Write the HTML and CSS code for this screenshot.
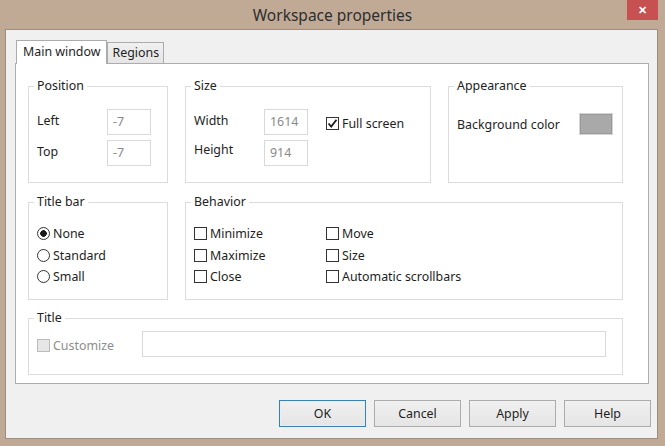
FILE: index.html
```html
<!DOCTYPE html>
<html lang="en">
<head>
    <meta charset="UTF-8">
    <title>Workspace properties</title>
    <link rel="stylesheet" href="styles.css">
</head>
<body>
    <div class="window">
        <div class="titlebar">
            <span></span>
            <span class="title">Workspace properties</span>
            <span class="close">&#x2715;</span>
        </div>

        <div class="client">
            <div class="tabs">
                <div class="tab active">Main window</div>
                <div class="tab">Regions</div>
            </div>

            <div class="panel">
                <div class="group">
                    <div class="group-title">Position</div>
                    <div class="field first">
                        <span class="field-label">Left</span>
                        <span class="edit">-7</span>
                    </div>
                    <div class="field">
                        <span class="field-label">Top</span>
                        <span class="edit">-7</span>
                    </div>
                </div>

                <div class="group">
                    <div class="group-title">Size</div>
                    <div class="field first">
                        <span class="field-label">Width</span>
                        <span class="edit">1614</span>
                        <span class="option fullscreen">
                            <span class="check">
                                <svg width="11" height="11" viewBox="0 0 11 11"><path d="M1.5 5.5 L4.2 8.5 L9.5 1.8" fill="none" stroke="#1a1a1a" stroke-width="1.8"/></svg>
                            </span>Full screen
                        </span>
                    </div>
                    <div class="field">
                        <span class="field-label raised">Height</span>
                        <span class="edit">914</span>
                    </div>
                </div>

                <div class="group">
                    <div class="group-title">Appearance</div>
                    <div class="field first">
                        <span class="field-label wide">Background color</span>
                        <span class="swatch"></span>
                    </div>
                </div>

                <div class="group tall">
                    <div class="group-title">Title bar</div>
                    <div class="options">
                        <span class="option"><span class="radio checked"></span>None</span>
                        <span class="option"><span class="radio"></span>Standard</span>
                        <span class="option"><span class="radio"></span>Small</span>
                    </div>
                </div>

                <div class="group tall span2">
                    <div class="group-title">Behavior</div>
                    <div class="options cols">
                        <span class="option"><span class="check"></span>Minimize</span>
                        <span class="option"><span class="check"></span>Move</span>
                        <span class="option"><span class="check"></span>Maximize</span>
                        <span class="option"><span class="check"></span>Size</span>
                        <span class="option"><span class="check"></span>Close</span>
                        <span class="option"><span class="check"></span>Automatic scrollbars</span>
                    </div>
                </div>

                <div class="group short span3">
                    <div class="group-title">Title</div>
                    <div class="field title-row">
                        <span class="option disabled"><span class="check"></span>Customize</span>
                        <span class="edit long"></span>
                    </div>
                </div>
            </div>

            <div class="buttons">
                <button class="btn default">OK</button>
                <button class="btn">Cancel</button>
                <button class="btn">Apply</button>
                <button class="btn">Help</button>
            </div>
        </div>
    </div>
</body>
</html>
```

FILE: styles.css
```css
body {
    margin: 0;
    background: #c0aa96;
    font-family: "Noto Sans", "Liberation Sans", sans-serif;
    font-size: 12.4px;
    color: #1e1e1e;
}
.window {
    width: 665px;
    height: 446px;
    background: #c0aa96;
    overflow: hidden;
}
.titlebar {
    height: 29px;
    display: grid;
    grid-template-columns: 1fr auto 1fr;
    align-items: start;
}
.title {
    font-size: 15.5px;
    line-height: 31px;
    color: #2e2e2e;
}
.close {
    justify-self: end;
    width: 31px;
    height: 20px;
    margin-right: 7px;
    background: #c75050;
    color: #fff;
    font-size: 11px;
    font-weight: bold;
    line-height: 20px;
    text-align: center;
}
.client {
    box-sizing: border-box;
    width: 653px;
    height: 410px;
    margin-left: 5px;
    padding: 10px 8px 0 9px;
    background: #f0f0f0;
    border: 1px solid #9b8e81;
}
.tabs {
    display: flex;
    align-items: flex-end;
    height: 23px;
}
.tab {
    box-sizing: border-box;
    height: 21px;
    padding: 0 4px;
    line-height: 20px;
    border: 1px solid #acacac;
    border-bottom: none;
    background: linear-gradient(#f0f0f0, #e5e5e5);
}
.tab.active {
    position: relative;
    z-index: 1;
    height: 24px;
    margin: 0 0 -1px 1px;
    padding: 0 6px;
    line-height: 22px;
    background: #fff;
}
.panel {
    box-sizing: border-box;
    height: 321px;
    padding: 22px 0 0 12px;
    background: #fff;
    border: 1px solid #acacac;
    display: grid;
    grid-template-columns: 140px 246px 175px;
    grid-template-rows: 97px 98px 56px;
    column-gap: 17px;
    row-gap: 19px;
    align-content: start;
}
.group {
    box-sizing: border-box;
    border: 1px solid #dcdcdc;
    padding: 0 8px;
}
.span2 { grid-column: span 2; }
.span3 { grid-column: span 3; }
.short { margin-top: -1px; }
.group-title {
    width: fit-content;
    margin: -9px 0 0 -3px;
    padding: 0 3px;
    line-height: 16px;
    background: #fff;
    color: #222;
}
.field {
    display: flex;
    align-items: center;
    height: 26px;
    margin-top: 5px;
}
.field.first { margin-top: 15px; }
.field-label { width: 70px; margin-bottom: 4px; }
.field-label.raised { margin-bottom: 8px; }
.field-label.wide { width: 122px; margin: 5px 0 0; }
.edit {
    box-sizing: border-box;
    width: 44px;
    height: 26px;
    padding-left: 5px;
    line-height: 24px;
    border: 1px solid #d9d9d9;
    color: #8a8a8a;
}
.edit.long { width: 464px; }
.swatch {
    box-sizing: border-box;
    width: 34px;
    height: 22px;
    margin-top: 4px;
    background: #a9a9a9;
    border: 1px solid #d4d4d4;
    box-shadow: inset 0 0 0 1px #9a9a9a;
}
.option {
    display: flex;
    align-items: center;
    height: 21.5px;
}
.fullscreen { margin-left: 18px; margin-top: 3px; }
.options { margin-top: 13px; }
.options.cols {
    display: grid;
    grid-template-columns: 132px auto;
}
.check, .radio {
    box-sizing: border-box;
    width: 13px;
    height: 13px;
    margin-right: 3px;
    border: 1px solid #333;
    background: #fff;
    display: flex;
    align-items: center;
    justify-content: center;
}
.radio { border-radius: 50%; }
.radio.checked {
    background: radial-gradient(circle, #1a1a1a 3px, #fff 3.6px);
}
.title-row { margin-top: 5px; }
.disabled { width: 105px; color: #8d8d8d; margin-top: 3px; }
.disabled .check {
    border-color: #bcbcbc;
    background: #e6e6e6;
}
.buttons {
    display: flex;
    justify-content: flex-end;
    gap: 8px;
    margin: 16px -2px 0 0;
}
.btn {
    box-sizing: border-box;
    width: 87px;
    height: 27px;
    font-family: inherit;
    font-size: 12.4px;
    color: #1e1e1e;
    border: 1px solid #acacac;
    background: linear-gradient(#f0f0f0, #e5e5e5);
    padding: 0;
}
.btn.default {
    border-color: #3c7fb1;
    box-shadow: inset 0 0 0 1px #e4eef8;
}
```
